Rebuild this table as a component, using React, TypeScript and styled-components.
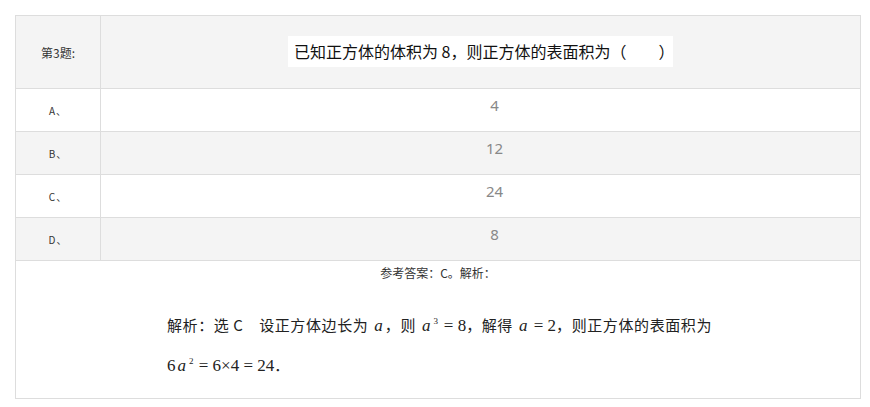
import React from "react";
import styled, { createGlobalStyle } from "styled-components";

const Global = createGlobalStyle`
  html, body { margin: 0; padding: 0; background: #fff; }
  body { font-family: "Noto Sans CJK SC", "Noto Sans", sans-serif; color: #333; }
`;

const Page = styled.div`
  padding: 15px 10px 0 15px;
`;

const Table = styled.div`
  width: 846px;
  box-sizing: border-box;
  border: 1px solid #ddd;
  border-bottom: none;
`;

const Row = styled.div<{ $h: number; $bg: string }>`
  display: grid;
  grid-template-columns: 85px 1fr;
  height: ${(p) => p.$h}px;
  box-sizing: border-box;
  background: ${(p) => p.$bg};
  border-bottom: 1px solid #ddd;
`;

const LabelCell = styled.div<{ $size: number }>`
  border-right: 1px solid #ddd;
  display: flex;
  align-items: center;
  justify-content: center;
  font-size: ${(p) => p.$size}px;
  color: #333;
  letter-spacing: ${(p) => (p.$size < 12 ? "1px" : "0")};
`;

const QuestionCell = styled.div`
  display: flex;
  align-items: center;
  justify-content: center;
`;

const QuestionBox = styled.span`
  display: inline-block;
  background: #fff;
  width: 385px;
  box-sizing: border-box;
  padding: 0 6px;
  line-height: 31px;
  height: 31px;
  font-size: 16px;
  color: #111;
  white-space: pre;
  text-align: left;
  margin-top: -1px;
  overflow: hidden;
`;

const ValueCell = styled.div`
  text-align: center;
  padding: 5px 0 0 28px;
  font-family: "Noto Sans", "Open Sans", sans-serif;
  font-size: 15px;
  line-height: 22px;
  color: #888;
`;

const AnswerRow = styled.div`
  height: 138px;
  box-sizing: border-box;
  border-bottom: 1px solid #ddd;
  padding-top: 1px;
`;

const AnswerTitle = styled.div`
  text-align: center;
  font-size: 12px;
  line-height: 22px;
  color: #333;
`;

const Solution = styled.div`
  width: 542px;
  margin: 30px auto 0;
  font-size: 15px;
  color: #222;
`;

const SolLine = styled.div<{ $spacing?: number }>`
  height: 40px;
  line-height: 22px;
  white-space: pre;
  letter-spacing: ${(p) => p.$spacing ?? 0}px;
`;

const M = styled.span`
  font-family: "Liberation Serif", "DejaVu Serif", serif;
  font-size: 17px;
  letter-spacing: 0;
`;

const I = styled.i`
  font-family: "Liberation Serif", "DejaVu Serif", serif;
  font-size: 17px;
  font-style: italic;
  margin: 0 2px;
  letter-spacing: 0;
`;

const Sup = styled.sup`
  font-family: "Liberation Serif", serif;
  font-size: 9px;
  vertical-align: 7px;
  line-height: 0;
  margin: 0 1px;
`;

const options = [
  { k: "A、", v: "4", bg: "#fff" },
  { k: "B、", v: "12", bg: "#f4f4f4" },
  { k: "C、", v: "24", bg: "#fff" },
  { k: "D、", v: "8", bg: "#f4f4f4" },
];

export default function App() {
  return (
    <>
      <Global />
      <Page>
        <Table>
          <Row $h={73} $bg="#f4f4f4">
            <LabelCell $size={12}>第3题:</LabelCell>
            <QuestionCell>
              <QuestionBox>已知正方体的体积为 8，则正方体的表面积为（　　）</QuestionBox>
            </QuestionCell>
          </Row>
          {options.map((o) => (
            <Row key={o.k} $h={43} $bg={o.bg}>
              <LabelCell $size={10}>{o.k}</LabelCell>
              <ValueCell>{o.v}</ValueCell>
            </Row>
          ))}
          <AnswerRow>
            <AnswerTitle>参考答案：C。解析：</AnswerTitle>
            <Solution>
              <SolLine $spacing={0.6}>
                解析：选 C　设正方体边长为 <I>a</I>，则 <I>a</I>
                <Sup>3</Sup>
                <M> = 8</M>，解得 <I>a</I>
                <M> = 2</M>，则正方体的表面积为
              </SolLine>
              <SolLine>
                <M>6</M>
                <I>a</I>
                <Sup>2</Sup>
                <M> = 6×4 = 24</M>．
              </SolLine>
            </Solution>
          </AnswerRow>
        </Table>
      </Page>
    </>
  );
}
